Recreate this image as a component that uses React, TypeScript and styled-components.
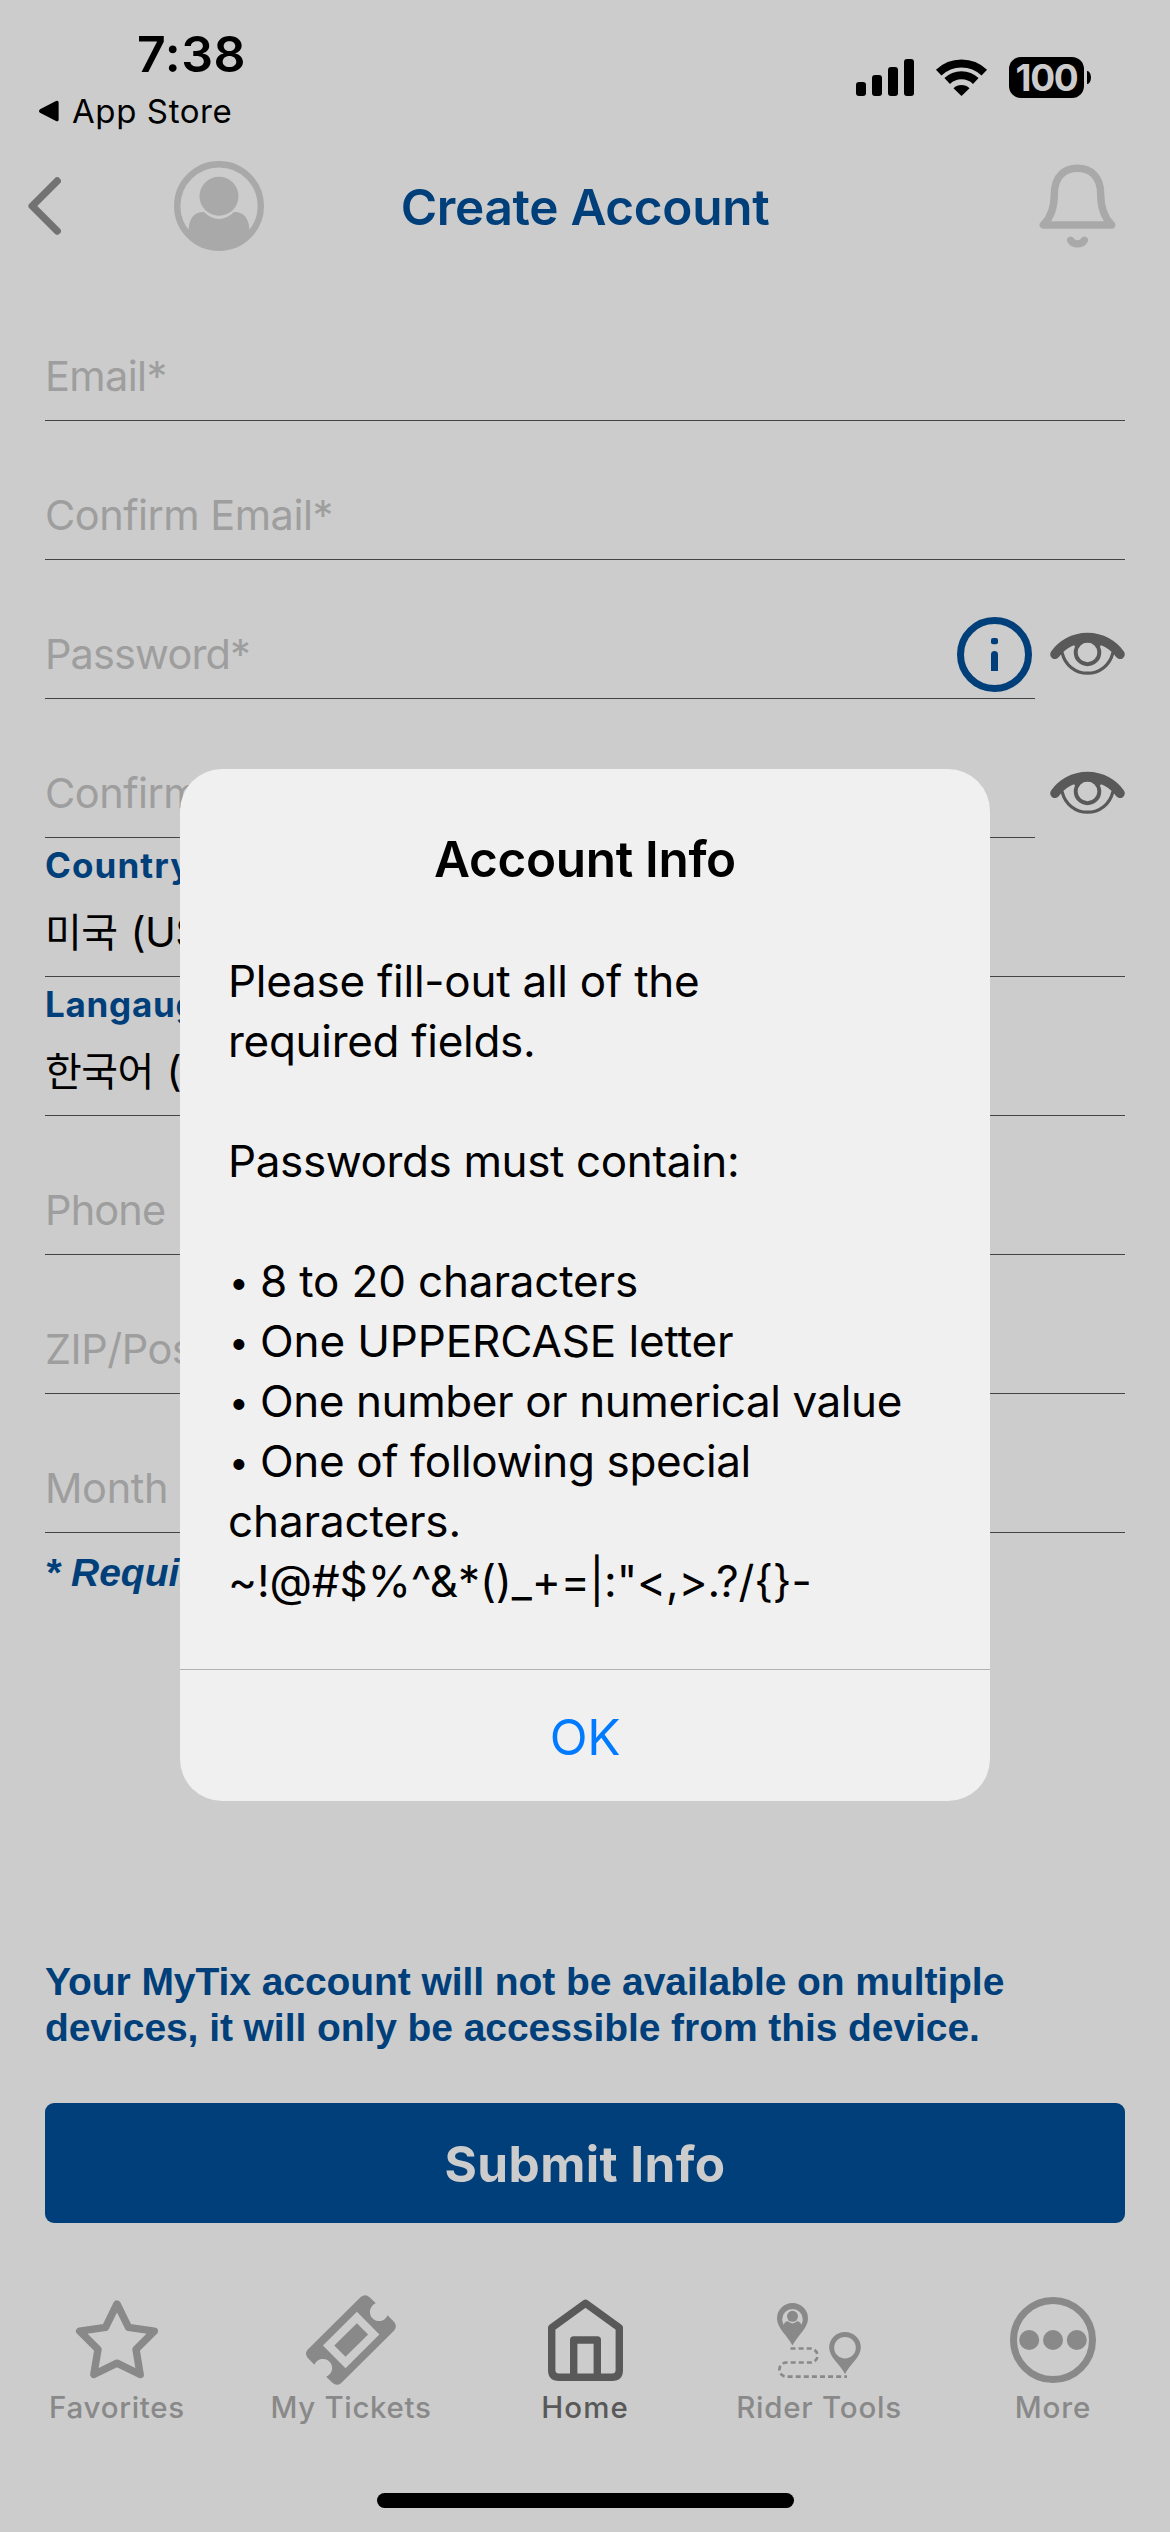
import React from "react";
import styled, { createGlobalStyle } from "styled-components";

const NAVY = "#003f7a";
const MUTED = "#a9a9a9";
const TAB = "#898989";
const TAB_ACTIVE = "#595959";

const GlobalStyle = createGlobalStyle`
  * { box-sizing: border-box; }
  html, body { margin: 0; padding: 0; background: #cccccc; }
  button { border: 0; padding: 0; margin: 0; background: none; font: inherit; color: inherit; }
  svg { display: block; flex: none; overflow: visible; }
`;

const Screen = styled.div`
  position: relative;
  display: flex;
  flex-direction: column;
  width: 1170px;
  height: 2532px;
  overflow: hidden;
  background: #cccccc;
  color: #000;
  font-family: Inter, "Noto Sans CJK KR", sans-serif;
  white-space: nowrap;
`;

/* ---------- status bar ---------- */

const StatusBar = styled.div`
  display: flex;
  justify-content: space-between;
  height: 141px;
  padding: 24px 79px 0 38px;
`;

const Clock = styled.div`
  padding-left: 99px;
  font-size: 50px;
  font-weight: 600;
  line-height: 60px;
  letter-spacing: 0.57px;
`;

const BackToApp = styled.div`
  display: flex;
  align-items: center;
  gap: 13px;
  height: 44px;
  margin-top: 5px;
  font-size: 33px;
  line-height: 44px;
  letter-spacing: 0.6px;
`;

const Indicators = styled.div`
  display: flex;
  align-items: center;
  height: 42px;
  margin-top: 32.5px;
`;

const SignalBars = styled.div`
  display: flex;
  align-items: flex-end;
  gap: 6px;
  height: 37px;
  margin-right: 22px;
`;

const SignalBar = styled.span<{ $height: number }>`
  width: 10px;
  height: ${(p) => p.$height}px;
  border-radius: 3px;
  background: #000;
`;

const Battery = styled.div`
  width: 75px;
  height: 41px;
  margin: 0 3px 0 22px;
  border-radius: 12px;
  background: #000;
  color: #cccccc;
  font-size: 37px;
  font-weight: 700;
  line-height: 41px;
  letter-spacing: -1.3px;
  text-align: center;
`;

const BatteryCap = styled.span`
  width: 4px;
  height: 13px;
  border-radius: 0 4px 4px 0 / 0 7px 7px 0;
  background: #000;
`;

/* ---------- header ---------- */

const Header = styled.header`
  display: grid;
  grid-template-columns: 264px 1fr 264px;
  align-items: center;
  height: 130px;
`;

const HeaderStart = styled.div`
  display: flex;
  align-items: center;
  justify-content: space-between;
  padding-left: 28px;
`;

const HeaderEnd = styled.div`
  display: flex;
  justify-content: flex-end;
  padding-right: 54px;
`;

const Title = styled.h1`
  margin: 0;
  padding-top: 2px;
  color: ${NAVY};
  font-size: 49.5px;
  font-weight: 600;
  line-height: 60px;
  letter-spacing: -0.32px;
  text-align: center;
`;

/* ---------- form ---------- */

const Form = styled.form`
  display: flex;
  flex-direction: column;
  padding: 11px 45px 0;
`;

const FieldRow = styled.div`
  display: flex;
  height: 139px;
`;

const Field = styled.div`
  display: flex;
  flex: 1;
  flex-direction: column;
  justify-content: flex-end;
  padding-bottom: 19px;
  border-bottom: 1px solid #444444;
`;

const PasswordInput = styled(Field)`
  flex-direction: row;
  align-items: flex-end;
  justify-content: space-between;
  padding-right: 3px;
`;

const Placeholder = styled.span<{ $track: number }>`
  height: 50px;
  color: #9e9e9e;
  font-size: 41.5px;
  line-height: 50px;
  letter-spacing: ${(p) => p.$track}px;
`;

const FieldLabel = styled.span<{ $track: number }>`
  margin-bottom: 19px;
  color: ${NAVY};
  font-size: 35px;
  font-weight: 700;
  line-height: 45px;
  letter-spacing: ${(p) => p.$track}px;
`;

const FieldValue = styled.span`
  display: flex;
  gap: 13px;
  height: 50px;
  font-size: 41.5px;
  line-height: 50px;
  letter-spacing: -0.6px;
`;

const Hangul = styled.span`
  height: 48px;
  font-family: "Noto Sans CJK KR", sans-serif;
  font-size: 40px;
  font-weight: 400;
  line-height: 47px;
`;

const InfoButton = styled.span`
  margin-bottom: -13px;
`;

const EyeButton = styled.span`
  width: 90px;
  padding: 72px 0 0 15px;
`;

const RequiredNote = styled.p`
  margin: 17px 0 0;
  color: ${NAVY};
  font-family: "Liberation Sans", sans-serif;
  font-size: 39px;
  font-style: italic;
  font-weight: 700;
  line-height: 46px;
`;

const Footer = styled.section`
  display: flex;
  flex-direction: column;
  margin-top: 363px;
  padding: 0 45px;
`;

const DeviceNote = styled.p`
  margin: 0;
  color: ${NAVY};
  font-family: "Liberation Sans", sans-serif;
  font-size: 39px;
  font-weight: 700;
  line-height: 46px;
  letter-spacing: -0.07px;
`;

const SubmitButton = styled.button`
  height: 120px;
  margin-top: 52px;
  padding-top: 2px;
  border-radius: 9px;
  background: ${NAVY};
  color: #cccccc;
  font-size: 49.5px;
  font-weight: 700;
  line-height: 60px;
  letter-spacing: 0.4px;
`;

/* ---------- tab bar ---------- */

const TabBar = styled.nav`
  display: grid;
  grid-template-columns: repeat(5, 1fr);
  margin-top: 72px;
`;

const Tab = styled.a<{ $active?: boolean }>`
  display: flex;
  flex-direction: column;
  align-items: center;
  gap: 5px;
  color: ${(p) => (p.$active ? TAB_ACTIVE : TAB)};
`;

const TabIcon = styled.span`
  display: flex;
  align-items: center;
  justify-content: center;
  height: 90px;
`;

const TabLabel = styled.span<{ $track: number }>`
  font-size: 29.5px;
  font-weight: 450;
  line-height: 35px;
  letter-spacing: ${(p) => p.$track}px;
`;

const HomeIndicator = styled.div`
  align-self: center;
  width: 417px;
  height: 15px;
  margin-top: 68px;
  border-radius: 8px;
  background: #000;
`;

/* ---------- alert ---------- */

const Overlay = styled.div`
  position: absolute;
  inset: 0;
  display: flex;
  flex-direction: column;
  align-items: center;
  padding-top: 769px;
`;

const Alert = styled.div`
  display: flex;
  flex-direction: column;
  width: 810px;
  height: 1032px;
  overflow: hidden;
  border-radius: 42px;
  background: #f0f0f0;
`;

const AlertTitle = styled.h2`
  margin: 60px 0 62px;
  font-size: 49.5px;
  font-weight: 600;
  line-height: 60px;
  letter-spacing: -0.33px;
  text-align: center;
`;

const AlertBody = styled.div`
  padding: 0 0 58px 48px;
  font-size: 44px;
  line-height: 60px;
`;

const AlertLine = styled.div<{ $track?: number }>`
  display: flex;
  height: 60px;
  letter-spacing: ${(p) => p.$track ?? 0}px;
`;

const Bullet = styled.span`
  width: 32px;
  padding: 1px 0 0 1px;
  font-size: 35px;
`;

const AlertButton = styled.button`
  flex: 1;
  padding-top: 3px;
  border-top: 1px solid #b2b2b4;
  color: #007aff;
  font-size: 49.5px;
  letter-spacing: -0.35px;
  text-align: center;
`;

/* ---------- icons ---------- */

const BackTriangle = () => (
  <svg width="21" height="22" viewBox="0 0 21 22">
    <path d="M2 9.2 18 .9Q20.6 0 20.6 2.6V19.4Q20.6 22 18 21.1L2 12.8Q0 11 2 9.2Z" fill="#000" />
  </svg>
);

const WifiIcon = () => (
  <svg width="51" height="37" viewBox="0 0 51 37">
    <g fill="none" stroke="#000" strokeWidth="8">
      <path d="M2.7 13.6A33 33 0 0 1 48.3 13.6" />
      <path d="M11.2 22A20.6 20.6 0 0 1 39.8 22" />
    </g>
    <path d="M25.5 37 17.5 29.2A11.5 11.5 0 0 1 33.5 29.2Z" fill="#000" />
  </svg>
);

const ChevronLeftIcon = () => (
  <svg width="33" height="58" viewBox="0 0 33 58">
    <path d="M29.2 4 4.2 29 29.2 54" fill="none" stroke="#727272" strokeWidth="7.4" strokeLinecap="round" strokeLinejoin="round" />
  </svg>
);

const AvatarIcon = () => (
  <svg width="90" height="90" viewBox="0 0 90 90">
    <circle cx="45" cy="45" r="41.8" fill="none" stroke={MUTED} strokeWidth="6.4" />
    <circle cx="45" cy="35.3" r="19.5" fill={MUTED} />
    <path d="M14.6 68C15.4 57 20.5 50.6 30 51Q37 58 45 58T60 51C69.5 50.6 74.6 57 75.4 68L76 73A41.8 41.8 0 0 1 14 73Z" fill={MUTED} />
  </svg>
);

const BellIcon = () => (
  <svg width="77" height="86" viewBox="0 0 77 86">
    <g fill="none" stroke={MUTED} strokeWidth="7.4" strokeLinecap="round" strokeLinejoin="round">
      <path d="M4.3 62H72.7C66 55.5 61.7 46 61.7 31C61.7 13 51 5.2 38.5 5.2S15.3 13 15.3 31C15.3 46 11 55.5 4.3 62Z" />
      <path d="M31.7 77.3C34.5 82 42.5 82 45.3 77.3" />
    </g>
  </svg>
);

const InfoIcon = () => (
  <svg width="75" height="75" viewBox="0 0 75 75">
    <circle cx="37.5" cy="37.5" r="34" fill="none" stroke={NAVY} strokeWidth="7" />
    <rect x="34" y="21" width="7" height="6.2" rx="2" fill={NAVY} />
    <path d="M34 54V37.5a3.5 3.5 0 0 1 7 0V54Z" fill={NAVY} />
  </svg>
);

const EyeIcon = () => (
  <svg width="75" height="44" viewBox="0 0 75 44">
    <g fill="none" stroke="#595959" strokeLinecap="round">
      <path d="M5 22.3A40 40 0 0 1 70 22.3" strokeWidth="9.6" />
      <path d="M12.3 21.3A25.9 25.9 0 0 0 62.7 21.3" strokeWidth="3.2" />
      <circle cx="37.5" cy="20.4" r="11.8" strokeWidth="3.9" />
    </g>
    <path d="M24 13.5 30 7H45L51 13.5 47.5 17A10.2 10.2 0 0 0 27.500 17Z" fill="#595959" />
  </svg>
);

const StarIcon = () => (
  <svg width="84" height="82" viewBox="0 0 84 82">
    <path
      d="M42 5 53.5 28.4 79.3 32.2 61 50.4 65.2 75.5 42 64.2 18.8 75.5 23 50.4 4.7 32.2 30.5 28.4Z"
      fill="none" stroke="currentColor" strokeWidth="7.4" strokeLinejoin="round"
    />
  </svg>
);

const TicketIcon = () => (
  <svg width="90" height="90" viewBox="0 0 90 90">
    <path
      fill="currentColor" fillRule="evenodd"
      d="M55 1.8Q59.4-1.7 63.6 2.2L69.8 8.3A9.2 9.2 0 1 0 81.6 20.3L88.2 27Q91.7 31.5 88.2 35.5L35 88.2Q30.6 91.7 26.4 87.8L20.2 81.7A9.2 9.2 0 1 0 8.4 69.7L1.8 63Q-1.7 58.5 1.8 54.5ZM50.9 16.7 16.9 50.5 39.5 73.2 73.4 39.4ZM50.9 28.2 62.1 39.4 39.5 61.8 28.3 50.5Z"
    />
  </svg>
);

const HomeIcon = () => (
  <svg width="75" height="84" viewBox="0 0 75 84">
    <g fill="none" stroke="currentColor" strokeWidth="7.4" strokeLinejoin="round">
      <path d="M3.7 29.7 37.5 5.2 71.3 29.7V72Q71.3 79.3 64 79.3H11Q3.7 79.3 3.7 72Z" />
      <path d="M25.7 79V42H49.3V79" />
    </g>
  </svg>
);

const RiderToolsIcon = () => (
  <svg width="86" height="78" viewBox="0 0 86 78">
    <path fill="currentColor" fillRule="evenodd" d="M16.5 44.5C11 34 1 27 1 17.5A15.5 15.5 0 0 1 32 17.5C32 27 22 34 16.5 44.5ZM16.5 8A10.3 10.3 0 0 0 6.2 18.3Q6.2 21.5 7.8 24Q8.5 20.3 12 20.3Q16.5 24.5 21 20.3Q24.5 20.3 25.2 24Q26.8 21.5 26.8 18.3A10.3 10.3 0 0 0 16.5 8Z" />
    <circle cx="16.5" cy="15.3" r="5.5" fill="currentColor" />
    <path fill="currentColor" fillRule="evenodd" d="M69 73C63.5 62.5 53.2 56 53.2 46.7A15.8 15.8 0 0 1 84.8 46.7C84.8 56 74.5 62.5 69 73ZM69 35.9A10.8 10.8 0 1 0 69 57.5A10.8 10.8 0 1 0 69 35.9Z" />
    <path d="M14.5 47.5H34.5A7 7 0 0 1 34.5 61.5H10.5A7 7 0 0 0 10.5 75.7H71" fill="none" stroke="currentColor" strokeWidth="2.7" strokeDasharray="5 3.1" />
  </svg>
);

const MoreIcon = () => (
  <svg width="86" height="86" viewBox="0 0 86 86">
    <circle cx="43" cy="43" r="39.5" fill="none" stroke="currentColor" strokeWidth="7" />
    <circle cx="19.2" cy="43" r="10" fill="currentColor" />
    <circle cx="43" cy="43" r="10" fill="currentColor" />
    <circle cx="66.8" cy="43" r="10" fill="currentColor" />
  </svg>
);

/* ---------- content ---------- */

const tabs = [
  { label: "Favorites", track: 0.72, icon: <StarIcon /> },
  { label: "My Tickets", track: 0.64, icon: <TicketIcon /> },
  { label: "Home", track: 1.1, icon: <HomeIcon />, active: true },
  { label: "Rider Tools", track: 0.76, icon: <RiderToolsIcon /> },
  { label: "More", track: 0.9, icon: <MoreIcon /> },
];

const alertLines: { text?: string; track?: number; bullet?: boolean }[] = [
  { text: "Please fill-out all of the", track: -0.25 },
  { text: "required fields.", track: -0.29 },
  {},
  { text: "Passwords must contain:", track: -0.38 },
  {},
  { text: "8 to 20 characters", track: -0.16, bullet: true },
  { text: "One UPPERCASE letter", track: -0.12, bullet: true },
  { text: "One number or numerical value", track: -0.42, bullet: true },
  { text: "One of following special", track: -0.38, bullet: true },
  { text: "characters.", track: -0.12 },
  { text: "~!@#$%^&*()_+=|:\"<,>.?/{}-", track: -0.14 },
];

function TextField({ placeholder, track }: { placeholder: string; track: number }) {
  return (
    <FieldRow>
      <Field>
        <Placeholder $track={track}>{placeholder}</Placeholder>
      </Field>
    </FieldRow>
  );
}

function PasswordField({ placeholder, track, info }: { placeholder: string; track: number; info?: boolean }) {
  return (
    <FieldRow>
      <PasswordInput>
        <Placeholder $track={track}>{placeholder}</Placeholder>
        {info && (
          <InfoButton>
            <InfoIcon />
          </InfoButton>
        )}
      </PasswordInput>
      <EyeButton>
        <EyeIcon />
      </EyeButton>
    </FieldRow>
  );
}

function SelectField({ label, track, hangul, latin }: { label: string; track: number; hangul: string; latin: string }) {
  return (
    <FieldRow>
      <Field>
        <FieldLabel $track={track}>{label}</FieldLabel>
        <FieldValue>
          <Hangul>{hangul}</Hangul>
          <span>{latin}</span>
        </FieldValue>
      </Field>
    </FieldRow>
  );
}

export default function App() {
  return (
    <>
      <GlobalStyle />
      <Screen>
        <StatusBar>
          <div>
            <Clock>7:38</Clock>
            <BackToApp>
              <BackTriangle />
              App Store
            </BackToApp>
          </div>
          <Indicators>
            <SignalBars>
              {[14, 21, 29, 37].map((h) => (
                <SignalBar key={h} $height={h} />
              ))}
            </SignalBars>
            <WifiIcon />
            <Battery>100</Battery>
            <BatteryCap />
          </Indicators>
        </StatusBar>

        <Header>
          <HeaderStart>
            <ChevronLeftIcon />
            <AvatarIcon />
          </HeaderStart>
          <Title>Create Account</Title>
          <HeaderEnd>
            <BellIcon />
          </HeaderEnd>
        </Header>

        <Form>
          <TextField placeholder="Email*" track={-0.64} />
          <TextField placeholder="Confirm Email*" track={-0.51} />
          <PasswordField placeholder="Password*" track={-0.88} info />
          <PasswordField placeholder="Confirm Password*" track={-0.51} />
          <SelectField label="Country" track={1.1} hangul="미국" latin="(USA)" />
          <SelectField label="Langauge" track={0.73} hangul="한국어" latin="(Korean)" />
          <TextField placeholder="Phone" track={-0.86} />
          <TextField placeholder="ZIP/Postal Code" track={-0.5} />
          <TextField placeholder="Month" track={-0.37} />
          <RequiredNote>* Required</RequiredNote>
        </Form>

        <Footer>
          <DeviceNote>
            Your MyTix account will not be available on multiple
            <br />
            devices, it will only be accessible from this device.
          </DeviceNote>
          <SubmitButton type="button">Submit Info</SubmitButton>
        </Footer>

        <TabBar>
          {tabs.map((tab) => (
            <Tab key={tab.label} $active={tab.active}>
              <TabIcon>{tab.icon}</TabIcon>
              <TabLabel $track={tab.track}>{tab.label}</TabLabel>
            </Tab>
          ))}
        </TabBar>
        <HomeIndicator />

        <Overlay>
          <Alert role="alertdialog">
            <AlertTitle>Account Info</AlertTitle>
            <AlertBody>
              {alertLines.map((line, i) => (
                <AlertLine key={i} $track={line.track}>
                  {line.bullet && <Bullet>•</Bullet>}
                  {line.text}
                </AlertLine>
              ))}
            </AlertBody>
            <AlertButton type="button">OK</AlertButton>
          </Alert>
        </Overlay>
      </Screen>
    </>
  );
}
